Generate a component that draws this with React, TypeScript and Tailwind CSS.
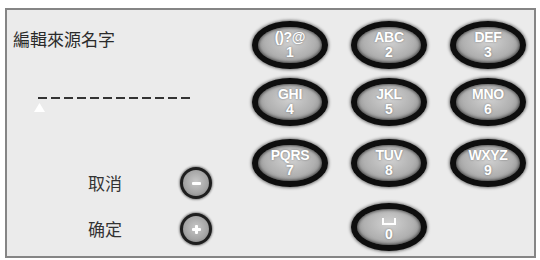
import React from "react";

type Key = { letters: string; digit: string };

const ROWS: Key[][] = [
  [
    { letters: "()?@", digit: "1" },
    { letters: "ABC", digit: "2" },
    { letters: "DEF", digit: "3" },
  ],
  [
    { letters: "GHI", digit: "4" },
    { letters: "JKL", digit: "5" },
    { letters: "MNO", digit: "6" },
  ],
  [
    { letters: "PQRS", digit: "7" },
    { letters: "TUV", digit: "8" },
    { letters: "WXYZ", digit: "9" },
  ],
];

// top margin of each keypad row, measured from the shot
const ROW_MT = ["mt-[11px]", "mt-[9px]", "mt-[13px]"];

function OvalKey({ letters, digit, space }: { letters?: string; digit: string; space?: boolean }) {
  return (
    <div className="w-[76px] h-[48px] rounded-[50%] bg-[#0e0e0e] shadow-[0_0_3px_1px_rgba(0,0,0,0.5)] p-[6px]">
      <div className="w-full h-full rounded-[50%] bg-[radial-gradient(ellipse_at_50%_40%,#d2d2d2_0%,#b0b0b0_55%,#767676_100%)] shadow-[inset_0_0_3px_1px_rgba(0,0,0,0.5)] flex flex-col items-center justify-center text-white font-bold [text-shadow:0_0_2px_rgba(0,0,0,0.4)]">
        {space ? (
          <div className="h-[15px] flex items-end justify-center pb-[2px]">
            <div className="w-[14px] h-[7px] border-x-2 border-b-2 border-white" />
          </div>
        ) : (
          <span className="text-[14px] leading-[15px] tracking-[-0.3px]">{letters}</span>
        )}
        <span className="text-[14px] leading-[15px]">{digit}</span>
      </div>
    </div>
  );
}

function RoundButton({ sign }: { sign: "-" | "+" }) {
  return (
    <div className="w-[32px] h-[32px] rounded-full bg-[#1e1e1e] shadow-[0_0_2px_1px_rgba(0,0,0,0.4)] p-[3px]">
      <div className="w-full h-full rounded-full bg-[radial-gradient(circle_at_50%_45%,#c8c8c8_0%,#a4a4a4_60%,#727272_100%)] flex items-center justify-center relative">
        <div className="w-[9px] h-[3px] bg-white rounded-[1px]" />
        {sign === "+" && <div className="absolute w-[3px] h-[9px] bg-white rounded-[1px]" />}
      </div>
    </div>
  );
}

export default function App() {
  return (
    <div className="w-[540px] h-[260px] bg-white pt-[8px] pl-[5px] font-['Liberation_Sans','Noto_Sans_CJK_TC',sans-serif]">
      <div className="w-[531px] h-[250px] border-2 border-[#858585] bg-[#ebebeb] flex">
        {/* left: name field and actions */}
        <div className="w-[245px] flex flex-col">
          <div className="mt-[19px] pl-[6px] h-[20px] text-[17px] leading-[20px] text-[#2a2a2a] font-['Noto_Sans_CJK_TC',sans-serif]">
            編輯來源名字
          </div>
          <div className="mt-[48px] pl-[31px] flex gap-[4px]">
            {Array.from({ length: 12 }).map((_, i) => (
              <div key={i} className="w-[9px] h-[2px] bg-[#333]" />
            ))}
          </div>
          <div className="mt-[4px] pl-[27px]">
            <svg width="11" height="9" viewBox="0 0 11 9">
              <polygon points="5.5,0 11,9 0,9" fill="#ffffff" />
            </svg>
          </div>
          <div className="mt-[55px] pl-[81px] flex items-center h-[32px]">
            <span className="w-[34px] text-[17px] leading-[20px] text-[#333] font-['Noto_Sans_CJK_SC',sans-serif]">取消</span>
            <div className="ml-[58px]">
              <RoundButton sign="-" />
            </div>
          </div>
          <div className="mt-[14px] pl-[81px] flex items-center h-[32px]">
            <span className="w-[34px] text-[17px] leading-[20px] text-[#333] font-['Noto_Sans_CJK_SC',sans-serif]">确定</span>
            <div className="ml-[58px]">
              <RoundButton sign="+" />
            </div>
          </div>
        </div>

        {/* right: keypad */}
        <div className="flex flex-col">
          {ROWS.map((row, r) => (
            <div key={r} className={`${ROW_MT[r]} flex gap-[23px]`}>
              {row.map((k) => (
                <OvalKey key={k.digit} letters={k.letters} digit={k.digit} />
              ))}
            </div>
          ))}
          <div className="mt-[16px] flex justify-center">
            <OvalKey digit="0" space />
          </div>
        </div>
      </div>
    </div>
  );
}
